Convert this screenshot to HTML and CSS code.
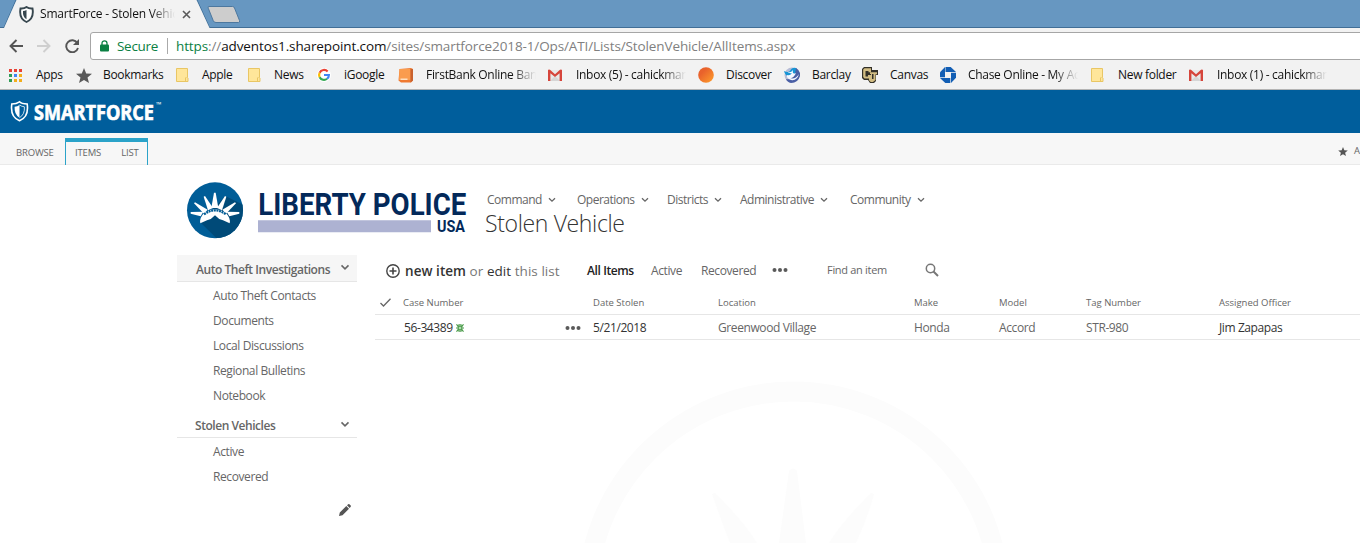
FILE: index.html
```html
<!DOCTYPE html>
<html lang="en">
<head>
<meta charset="utf-8">
<title>SmartForce - Stolen Vehicle</title>
<link rel="stylesheet" href="styles.css">
</head>
<body>
<svg width="0" height="0" class="defs" aria-hidden="true">
  <defs>
    <symbol id="folder" viewBox="0 0 14 16"><path d="M1.500 1.500h11v9l.5 .5v3.500h-11.500z" fill="#ffe69a" stroke="#e9c664"/><path d="M10.500 14v-3l1-1" fill="none" stroke="#e9c664"/></symbol>
    <symbol id="gmail" viewBox="0 0 14 12"><path d="M0 1h14v11H0z" fill="#e9e9e9"/><path d="M2 12l5-5 5 5z" fill="#d6d6d6"/><path d="M0 12V1.200Q.5 0 2 .8l5 4.400 5-4.400q1.500-.8 2 .4V12h-2.400V4.300L7 8 2.400 4.300V12z" fill="#d6453b"/></symbol>
    <symbol id="chevron" viewBox="0 0 8 6"><path d="M1 1.200l3 3 3-3" fill="none" stroke="currentColor" stroke-width="1.300"/></symbol>
    <symbol id="dots" viewBox="0 0 16 6"><g fill="#5a5a5a"><circle cx="2.500" cy="3" r="2"/><circle cx="8" cy="3" r="2"/><circle cx="13.500" cy="3" r="2"/></g></symbol>
  </defs>
</svg>

<header class="browser">
  <div class="tabstrip">
    <svg class="tab-shape" width="245" height="28" viewBox="0 0 245 28"><path d="M0 27.500H4L16 0H197L209.500 27.500H245" fill="none" stroke="#416e96"/><path d="M4 28L16.500 0H196.500L209.500 28z" fill="#f2f2f2"/><path d="M208.500 6.500h24q1.500 0 2 1.500l5 12.500q.6 2-1 2h-22.500q-2 0-2.700-1.700l-5-12.500q-.6-1.800.2-1.800z" fill="#cdcdcd" stroke="#4d789f"/></svg>
    <div class="tab">
      <svg class="tab-shield" width="15" height="17" viewBox="0 0 15 17"><path d="M7.500 1C5.500 2.500 3.500 2.700 1.500 2.500 .5 8 1 13 7.500 16 14 13 14.500 8 13.500 2.500 11.500 2.700 9.500 2.500 7.500 1z" fill="#fff" stroke="#37474f" stroke-width="1.900"/><path d="M7.500 4Q6 5 4 5 3.500 11 7.500 13.300z" fill="#37474f"/></svg>
      <span class="tab-title fade">SmartForce - Stolen Vehicle</span>
      <svg width="9" height="9" viewBox="0 0 9 9"><path d="M1 1l7 7M8 1L1 8" stroke="#5a5a5a" stroke-width="1.600"/></svg>
    </div>
  </div>
  <div class="toolbar">
    <svg class="nav-icon" width="14" height="14" viewBox="0 0 14 14"><path d="M14 7H1.500M7.500 1L1.500 7l6 6" fill="none" stroke="#555" stroke-width="1.900"/></svg>
    <svg class="nav-icon" width="14" height="14" viewBox="0 0 14 14"><path d="M0 7h12.500M6.500 1l6 6-6 6" fill="none" stroke="#cfcfcf" stroke-width="1.900"/></svg>
    <svg class="nav-icon" width="15" height="14" viewBox="0 0 15 14"><path d="M12.300 4A6 6 0 1 0 13 9" fill="none" stroke="#555" stroke-width="1.900"/><path d="M14 0v6H8z" fill="#555"/></svg>
    <div class="omnibox">
      <svg width="9" height="12" viewBox="0 0 9 12"><path d="M2 5V3.300a2.500 2.500 0 0 1 5 0V5" fill="none" stroke="#0b8043" stroke-width="1.300"/><rect x="0" y="4.500" width="9" height="7" rx="1" fill="#0b8043"/></svg>
      <span class="secure">Secure</span>
      <span class="url"><b class="scheme">https</b>://<b class="host">adventos1.sharepoint.com</b><span class="path">/sites/smartforce2018-1/Ops/ATI/Lists/StolenVehicle/AllItems.aspx</span></span>
    </div>
  </div>
  <nav class="bookmarks">
    <a><i><svg width="13" height="13" viewBox="0 0 13 13"><path d="M0 0h3v3H0zM5 0h3v3H5zM10 0h3v3h-3z" fill="#e84235"/><path d="M0 5h3v3H0zM0 10h3v3H0z" fill="#2f9c57"/><path d="M5 5h3v3H5z" fill="#4285f4"/><path d="M10 5h3v3h-3zM5 10h3v3H5zM10 10h3v3h-3z" fill="#f3ae1b"/></svg></i><span>Apps</span></a>
    <a><i><svg width="16" height="15" viewBox="0 0 16 15"><path d="M8 0l2.200 5.400 5.800.4-4.500 3.700L13 15l-5-3.100L3 15l1.500-5.500L0 5.800l5.800-.4z" fill="#5a5a5a"/></svg></i><span>Bookmarks</span></a>
    <a><i><svg width="14" height="16"><use href="#folder"/></svg></i><span>Apple</span></a>
    <a><i><svg width="14" height="16"><use href="#folder"/></svg></i><span>News</span></a>
    <a><i><svg width="14" height="14" viewBox="0 0 16 16"><circle cx="8" cy="8" r="8" fill="#fff"/><g fill="none" stroke-width="2.500"><path d="M12.200 4A5.600 5.600 0 0 0 3 5.500" stroke="#ea4335"/><path d="M3 5.500A5.600 5.600 0 0 0 3 10.500" stroke="#fbbc05"/><path d="M3 10.500A5.600 5.600 0 0 0 11.500 12.300" stroke="#34a853"/><path d="M11.500 12.300A5.500 5.500 0 0 0 13.600 8H8" stroke="#4285f4"/></g></svg></i><span>iGoogle</span></a>
    <a><i><svg width="16" height="15" viewBox="0 0 16 15"><path d="M1.500 1L13 0l2 1v11.500l-2 2H3L.5 12.500z" fill="#ef7a32"/><path d="M1.500 1L12.500 1v11H1z" fill="#fa9c4e"/><path d="M2.500 10.500h7v1.500h-7z" fill="#ffe0c0"/><path d="M12.500 1l2.500 0V12.500l-2.500 2z" fill="#c9622f"/></svg></i><span class="fade">FirstBank Online Banking</span></a>
    <a><i><svg width="14" height="12"><use href="#gmail"/></svg></i><span class="fade">Inbox (5) - cahickman</span></a>
    <a><i><svg width="17" height="16" viewBox="0 0 17 16"><defs><linearGradient id="orange" x2="1" y2="1"><stop offset=".3" stop-color="#e9622c"/><stop offset="1" stop-color="#ffa02c"/></linearGradient></defs><circle cx="8" cy="8" r="7.800" fill="url(#orange)"/></svg></i><span>Discover</span></a>
    <a><i><svg width="16" height="16" viewBox="0 0 16 16"><circle cx="8" cy="8" r="7.500" fill="#b6bcd6"/><path d="M0 4q4 2 6 0 2-4 6-3 2 1 0 5-2 4-6 4-5-1-6-6z" fill="#1795d5"/><path d="M2 12q9 2 10-11 5 3 4 8-2 7-9 7-4-1-5-4z" fill="#4a5fa5"/><path d="M3 4q3 3 6-1-1 5 3 3-2 5-6 5 5 2 9-4-2 7-8 6Q2 11 3 8q3 1 5-2-3 1-5-2z" fill="#f4f7ff"/></svg></i><span>Barclay</span></a>
    <a><i><svg width="16" height="16" viewBox="0 0 16 16"><path d="M2 0h8v3h6v5h-2v6l-2 2H8l-2-3H2L0 11V2z" fill="#333028"/><path d="M2.500 1.200h6.500v4H6.500V4h-3v5.500H6V8h3v3.500H2.500L1.200 10V2.500z" fill="#d2bd83"/><path d="M8 5.200h3V7h-1v5h1.500V7h-1V5.200H15v2h-1.500V13L11 15H8.700L7 13.200V11h2V7H8z" fill="#d2bd83"/></svg></i><span>Canvas</span></a>
    <a><i><svg width="16" height="16" viewBox="0 0 16 16"><g fill="#125eb4"><path d="M5.500 0h5.200L16 5H5.500z"/><path d="M16 5.700v5L11 16V5.700z"/><path d="M10.300 16h-5L0 11h10.300z"/><path d="M0 10.300v-5L5 0v10.300z"/></g></svg></i><span class="fade">Chase Online - My Acc</span></a>
    <a><i><svg width="14" height="16"><use href="#folder"/></svg></i><span>New folder</span></a>
    <a><i><svg width="14" height="12"><use href="#gmail"/></svg></i><span class="fade">Inbox (1) - cahickman</span></a>
  </nav>
</header>

<div class="suitebar">
  <svg width="160" height="26" viewBox="0 0 160 26"><path d="M9.500 1.800Q6.500 4 1.800 4C.8 11 1.500 17.500 9.500 20.700 17.500 17.500 18.200 11 17.200 4 12.500 4 10.500 3 9.500 1.800z" fill="none" stroke="#fff" stroke-width="1.600"/><path d="M9.500 5Q7.500 6.500 4.600 6.800 4.100 14.500 9.500 17.700z" fill="#fff"/><path d="M9.500 5Q11.500 6.500 14.400 6.800 14.900 14.500 9.500 17.700" fill="none" stroke="#fff" stroke-width=".8"/><text class="brand" x="24" y="19.500" textLength="120" lengthAdjust="spacingAndGlyphs">SMARTFORCE</text><text class="tm" x="146" y="7">™</text></svg>
</div>

<div class="ribbon">
  <span class="ribbon-browse">BROWSE</span>
  <div class="ribbon-group"><span>ITEMS</span><span>LIST</span></div>
  <div class="ribbon-share"><svg width="10" height="9" viewBox="0 0 16 15"><path d="M8 0l2.200 5.400 5.800.4-4.500 3.700L13 15l-5-3.100L3 15l1.500-5.500L0 5.800l5.800-.4z" fill="#555"/></svg><span>A</span></div>
</div>

<main class="page">
  <svg class="watermark" width="452" height="162" viewBox="0 0 452 162"><g fill="#fcfcfc"><path d="M219 90q4-5 8 0l9 72h-27z"/><path d="M142 113l3-1q30 30 42 50h-27q-10-26-18-49z"/><path d="M304 113l-3-1q-30 30-42 50h27q12-26 18-49z"/></g><circle cx="223.500" cy="216.500" r="206" fill="none" stroke="#fcfcfc" stroke-width="20"/></svg>

  <div class="masthead">
    <svg class="site-logo" width="290" height="70" viewBox="0 0 870 210">
      <defs><clipPath id="disc"><circle cx="105" cy="91" r="84"/></clipPath></defs>
      <circle cx="105" cy="91" r="84" fill="#005d97"/>
      <g clip-path="url(#disc)"><path d="M60 126L125 190H200V80L136 48 105 80z" fill="#004a78"/></g>
      <g fill="#fff"><path d="M102 38h5l8 46H94z"/><path d="M71 50l4-2 24 36-15 7z"/><path d="M139 50l-4-2-24 36 15 7z"/><path d="M42 70l3-3 38 22-11 12z"/><path d="M168 70l-3-3-38 22 11 12z"/><path d="M32 96v5l30 8 8-14z"/><path d="M178 96v5l-30 8-8-14z"/><path d="M61 130q-4-16 12-32 32-20 64 0 16 16 12 32l-20-9q-14-3-24-15-10 12-24 15z"/></g>
      <path d="M72 103q33-24 66 0" fill="none" stroke="#005d97" stroke-width="7" stroke-dasharray="6 2"/>
      <text class="logo-name" x="235" y="106" textLength="624" lengthAdjust="spacingAndGlyphs">LIBERTY POLICE</text>
      <path d="M234 121h519v36H234z" fill="#adb2d2"/>
      <text class="logo-usa" x="771" y="157" textLength="84" lengthAdjust="spacingAndGlyphs">USA</text>
    </svg>
    <div class="heading">
      <nav class="topnav">
        <a>Command<svg width="8" height="6"><use href="#chevron"/></svg></a>
        <a>Operations<svg width="8" height="6"><use href="#chevron"/></svg></a>
        <a>Districts<svg width="8" height="6"><use href="#chevron"/></svg></a>
        <a>Administrative<svg width="8" height="6"><use href="#chevron"/></svg></a>
        <a>Community<svg width="8" height="6"><use href="#chevron"/></svg></a>
      </nav>
      <h1>Stolen Vehicle</h1>
    </div>
  </div>

  <div class="columns">
    <aside class="sidenav">
      <div class="group shaded"><span>Auto Theft Investigations</span><svg width="10" height="7"><use href="#chevron"/></svg></div>
      <a>Auto Theft Contacts</a>
      <a>Documents</a>
      <a>Local Discussions</a>
      <a>Regional Bulletins</a>
      <a>Notebook</a>
      <div class="group second"><span>Stolen Vehicles</span><svg width="10" height="7"><use href="#chevron"/></svg></div>
      <a>Active</a>
      <a>Recovered</a>
      <div class="edit"><svg width="12" height="12" viewBox="0 0 12 12"><path d="M0 12l.8-3.500L7.300 2l2.700 2.700-6.500 6.500zM8 1.300L9.200.2q.6-.4 1.200 0l1.300 1.300q.5.600 0 1.200L10.700 4z" fill="#555"/></svg></div>
    </aside>

    <section class="list">
      <div class="commands">
        <svg width="14" height="14" viewBox="0 0 14 14"><circle cx="7" cy="7" r="6.200" fill="none" stroke="#444" stroke-width="1.400"/><path d="M7 3.500v7M3.500 7h7" stroke="#444" stroke-width="1.600"/></svg>
        <span class="new"><b>new item</b> or <em>edit</em> this list</span>
        <span class="view current">All Items</span>
        <span class="view active">Active</span>
        <span class="view recovered">Recovered</span>
        <svg class="more" width="16" height="6"><use href="#dots"/></svg>
        <span class="find">Find an item</span>
        <svg class="search" width="14" height="14" viewBox="0 0 14 14"><circle cx="5.500" cy="5.500" r="4.200" fill="none" stroke="#777" stroke-width="1.500"/><path d="M8.500 8.500L13 13" stroke="#777" stroke-width="2"/></svg>
      </div>
      <div class="row head">
        <span class="tick"><svg width="11" height="9" viewBox="0 0 11 9"><path d="M.5 5l3 3L10.500.7" fill="none" stroke="#666" stroke-width="1.300"/></svg></span>
        <span>Case Number</span><span></span><span>Date Stolen</span><span>Location</span><span>Make</span><span>Model</span><span>Tag Number</span><span>Assigned Officer</span>
      </div>
      <div class="row item">
        <span></span>
        <span class="dark case">56-34389<svg width="8" height="8" viewBox="0 0 9 9"><path d="M.5.500l2 2M8.500.500l-2 2M.5 8.500l2-2M8.500 8.500l-2-2M3.500 0v2M5.500 0v2M3.500 7v2M5.500 7v2M0 4.500h2M7 4.500h2" stroke="#4b9c4b" stroke-width="1.300"/><rect x="2.500" y="2.500" width="4" height="4" fill="#b5d8b5" stroke="#4b9c4b" stroke-width="1.400"/></svg></span>
        <span><svg width="16" height="6"><use href="#dots"/></svg></span>
        <span class="dark date">5/21/2018</span><span>Greenwood Village</span><span>Honda</span><span>Accord</span><span>STR-980</span><span class="dark">Jim Zapapas</span>
      </div>
    </section>
  </div>
</main>
</body>
</html>
```
FILE: styles.css
```css
* { box-sizing: border-box; }
body { margin: 0; width: 1360px; height: 543px; overflow: hidden; background: #fff; color: #666; font: 12px/16px "Open Sans", "Noto Sans", sans-serif; letter-spacing: -0.4px; }
svg { display: block; flex: none; }
.defs { position: absolute; }
span { white-space: nowrap; }
.fade { overflow: hidden; -webkit-mask-image: linear-gradient(90deg, #000 calc(100% - 24px), transparent); mask-image: linear-gradient(90deg, #000 calc(100% - 24px), transparent); }

.browser { height: 90px; background: #f2f2f2; border-bottom: 1px solid #b4b4b4; color: #111; letter-spacing: -0.3px; }
.tabstrip { position: relative; height: 28px; background: #6797c1; border-bottom: 1px solid #416e96; }
.tab-shape { position: absolute; left: 0; top: 0; }
.tab { position: relative; display: flex; align-items: center; height: 28px; padding-left: 19px; }
.tab-title { width: 135px; margin: 0 7px 0 6px; letter-spacing: -0.2px; }
.toolbar { display: flex; align-items: center; height: 36px; padding-left: 9px; }
.nav-icon { margin-right: 14px; }
.nav-icon:nth-child(3) { margin-right: 10px; }
.omnibox { display: flex; align-items: center; flex: 1; height: 28px; margin-right: -8px; padding-left: 9px; border: 1px solid #a6a6a6; border-radius: 3px; background: #fff; font-size: 13.5px; letter-spacing: -0.11px; }
.secure { width: 51px; margin-left: 8px; border-right: 1px solid #aaa; color: #0b8043; letter-spacing: -0.3px; }
.url { margin-left: 8px; color: #808080; }
.url b { font-weight: 400; }
.url .scheme { color: #0b8043; }
.url .host { color: #111; }
.bookmarks { display: grid; grid-template-columns: 67px 99px 72px 70px 82px 150px 150px 86px 78px 78px 150px 99px 140px; height: 24px; padding-left: 9px; margin-top: -1px; }
.bookmarks a { display: flex; align-items: center; min-width: 0; }
.bookmarks i { width: 27px; flex: none; }
.bookmarks a:nth-child(n+6) i svg { margin-left: -1px; }
.bookmarks .fade { width: 110px; }

.suitebar { height: 43px; padding: 10px 0 0 10px; background: #005e9c; }
.brand { font: 700 21px "Open Sans", sans-serif; fill: #fff; stroke: #fff; stroke-width: .7; letter-spacing: 0; }
.tm { font: 7px "Open Sans", sans-serif; fill: #fff; }
.ribbon { display: flex; height: 32px; padding-top: 5px; background: #f7f7f7; border-bottom: 1px solid #eaeaea; font-size: 9.5px; line-height: 30px; letter-spacing: -0.15px; }
.ribbon-browse { width: 65px; padding-left: 16px; }
.ribbon-group { display: flex; width: 83px; height: 27px; padding-left: 9px; gap: 20px; border: 1px solid #2ba3c9; border-top-width: 4px; border-bottom: 0; line-height: 21px; }
.ribbon-share { display: flex; align-items: center; gap: 6px; height: 26px; margin-left: 1190px; }

.page { position: relative; height: 378px; overflow: hidden; }
.watermark { position: absolute; left: 570px; top: 216px; }
.masthead { position: relative; display: flex; height: 90px; padding-left: 180px; }
.site-logo { margin-top: 15px; }
.logo-name { font: 700 95px Roboto, sans-serif; fill: #03295a; letter-spacing: 0; }
.logo-usa { font: 700 48px Roboto, sans-serif; fill: #03295a; letter-spacing: 0; }
.heading { padding: 27px 0 0 15px; }
.topnav { display: grid; grid-template-columns: 90px 90px 73px 110px 80px; padding-left: 2px; letter-spacing: -0.5px; }
.topnav a { display: flex; align-items: center; gap: 6px; }
h1 { margin: 0; color: #333; font: 300 23px/30px "Open Sans", sans-serif; letter-spacing: -0.35px; }
.columns { position: relative; display: flex; }
.sidenav { width: 180px; margin-left: 177px; }
.group { display: flex; align-items: center; justify-content: space-between; height: 27px; padding: 4px 7px 0 19px; border-bottom: 1px solid #e6e6e6; font-weight: 600; letter-spacing: -0.45px; }
.shaded { background: #f6f6f6; margin-bottom: 1px; }
.group svg { margin-top: -5px; }
.second { margin: 3px 0 1px; padding-left: 18px; }
.second svg { margin-top: -3px; }
.sidenav a { display: block; height: 25px; padding-left: 36px; line-height: 25px; }
.edit { display: flex; justify-content: flex-end; padding: 15px 6px 0 0; }
.list { width: 985px; margin-left: 18px; }
.commands { display: flex; align-items: center; height: 32px; padding-left: 11px; }
.new { width: 182px; margin-left: 5px; color: #777; font-size: 13.5px; letter-spacing: 0.05px; }
.new b { color: #333; font-weight: 600; }
.new em { color: #333; font-style: normal; }
.current { width: 64px; color: #222; font-weight: 600; }
.active { width: 50px; }
.recovered { width: 71px; }
.more { margin: -2px 39px 0 0; }
.find { width: 98px; margin-top: -2px; font-size: 11px; letter-spacing: -0.3px; }
.search { margin-top: -2px; }
.row { display: grid; grid-template-columns: 28px 162px 28px 125px 196px 85px 87px 133px 141px; align-items: center; border-bottom: 1px solid #e6e6e6; }
.head { height: 28px; padding-top: 4px; font-size: 9.5px; letter-spacing: 0; }
.tick { padding-left: 5px; }
.item { height: 25px; padding-top: 2px; }
.dark { color: #333; }
.case { display: flex; align-items: center; gap: 3px; padding-left: 1px; }
```
